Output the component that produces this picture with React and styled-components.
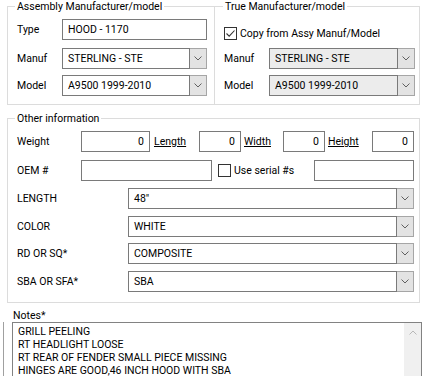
import styled, { createGlobalStyle } from "styled-components";

const GlobalStyle = createGlobalStyle`
  html, body {
    margin: 0;
    padding: 0;
    background: #ffffff;
  }
  body {
    width: 422px;
    height: 376px;
    overflow: hidden;
    font-family: Roboto, "Liberation Sans", Arial, sans-serif;
    font-size: 10.5px;
    color: #000;
  }
`;

const Page = styled.div`
  width: 422px;
  height: 376px;
  overflow: hidden;
  display: flex;
  flex-direction: column;
`;

const TopRow = styled.div`
  display: flex;
  padding-left: 7px;
`;

const Group = styled.fieldset`
  margin: ${(p) => p.$mt || 0}px 0 0 ${(p) => p.$ml || 0}px;
  padding: 6px 0 ${(p) => p.$pb}px 9px;
  width: ${(p) => p.$w}px;
  box-sizing: border-box;
  min-width: 0;
  border: 1px solid #dcdcdc;
`;

const Legend = styled.legend`
  margin-left: ${(p) => p.$ml}px;
  padding: 0 2px;
  height: 13px;
  line-height: 13px;
  white-space: nowrap;
`;

const Row = styled.div`
  display: flex;
  align-items: center;
  height: 21px;
  margin-top: ${(p) => p.$mt || 0}px;
`;

const Label = styled.div`
  width: ${(p) => p.$w}px;
  flex-shrink: 0;
  white-space: nowrap;
`;

const LinkLabel = styled.div`
  width: ${(p) => p.$w}px;
  padding-left: ${(p) => p.$pl}px;
  box-sizing: border-box;
  flex-shrink: 0;
  text-decoration: underline;
  white-space: nowrap;
`;

const TextBox = styled.div`
  width: ${(p) => p.$w}px;
  height: 21px;
  box-sizing: border-box;
  flex-shrink: 0;
  border: 1px solid #7a7a7a;
  background: #fff;
  display: flex;
  align-items: center;
  justify-content: ${(p) => (p.$right ? "flex-end" : "flex-start")};
  padding: 0 5px;
  white-space: nowrap;
  overflow: hidden;
`;

const Combo = styled.div`
  width: ${(p) => p.$w}px;
  height: 21px;
  flex-shrink: 0;
  display: flex;
`;

const ComboField = styled.div`
  flex: 1;
  min-width: 0;
  box-sizing: border-box;
  border: 1px solid #7a7a7a;
  background: ${(p) => (p.$disabled ? "#ececec" : "#fff")};
  display: flex;
  align-items: center;
  padding: 0 5px;
  white-space: nowrap;
  overflow: hidden;
`;

const DropButton = styled.div`
  width: 17px;
  flex-shrink: 0;
  box-sizing: border-box;
  border: 1px solid #a6a6a6;
  border-left: none;
  background: #e3e3e3;
  display: flex;
  align-items: center;
  justify-content: center;
`;

const CheckRow = styled.div`
  display: flex;
  align-items: center;
  height: 13px;
  margin-top: ${(p) => p.$mt || 0}px;
  white-space: nowrap;
`;

const Box = styled.div`
  width: 13px;
  height: 13px;
  box-sizing: border-box;
  flex-shrink: 0;
  border: 1px solid #333;
  background: #fff;
  display: flex;
  align-items: center;
  justify-content: center;
`;

const CheckText = styled.div`
  width: ${(p) => p.$w || "auto"};
  padding-left: 3px;
  flex-shrink: 0;
  white-space: nowrap;
`;

const Spacer = styled.div`
  width: ${(p) => p.$w}px;
  flex-shrink: 0;
`;

const NotesLabel = styled.div`
  margin-top: 6px;
  padding-left: 13px;
  height: 13px;
  line-height: 13px;
`;

const NotesRow = styled.div`
  display: flex;
  flex: 1;
`;

const Gutter = styled.div`
  width: 5px;
  margin-right: 8px;
  box-sizing: border-box;
  border-right: 1px solid #a0a0a0;
`;

const NotesBox = styled.div`
  width: 410px;
  height: 70px;
  flex-shrink: 0;
  box-sizing: border-box;
  border: 1px solid #828282;
  display: flex;
`;

const NotesText = styled.div`
  flex: 1;
  padding: 2px 0 0 5px;
  line-height: 13px;
  white-space: nowrap;
  overflow: hidden;
`;

const ScrollBar = styled.div`
  width: 17px;
  background: #f0f0f0;
  display: flex;
  justify-content: center;
  padding-top: 7px;
  box-sizing: border-box;
`;

const Chevron = ({ up, color = "#606060" }) => (
  <svg width="8" height="5" viewBox="0 0 8 5">
    <path
      d={up ? "M0.5 4.5 L4 1 L7.5 4.5" : "M0.5 0.5 L4 4 L7.5 0.5"}
      fill="none"
      stroke={color}
      strokeWidth="1"
    />
  </svg>
);

function ComboBox({ w, value, disabled }) {
  return (
    <Combo $w={w}>
      <ComboField $disabled={disabled}>{value}</ComboField>
      <DropButton>
        <Chevron />
      </DropButton>
    </Combo>
  );
}

function CheckBox({ checked }) {
  return (
    <Box>
      {checked && (
        <svg width="11" height="11" viewBox="0 0 11 11">
          <path d="M1.5 5.5 L4.2 8.2 L9.5 2.5" fill="none" stroke="#333" strokeWidth="1.1" />
        </svg>
      )}
    </Box>
  );
}

const extraFields = [
  { label: "LENGTH", value: '48"', mt: 7 },
  { label: "COLOR", value: "WHITE", mt: 7 },
  { label: "RD OR SQ*", value: "COMPOSITE", mt: 6 },
  { label: "SBA OR SFA*", value: "SBA", mt: 7 },
];

const notes = [
  "GRILL PEELING",
  "RT HEADLIGHT LOOSE",
  "RT REAR OF FENDER SMALL PIECE MISSING",
  "HINGES ARE GOOD,46 INCH HOOD WITH SBA",
];

export default function App() {
  return (
    <Page>
      <GlobalStyle />
      <TopRow>
        <Group $w={208} $pb={8}>
          <Legend $ml={-2}>Assembly Manufacturer/model</Legend>
          <Row>
            <Label $w={45}>Type</Label>
            <TextBox $w={145}>HOOD - 1170</TextBox>
          </Row>
          <Row $mt={8}>
            <Label $w={45}>Manuf</Label>
            <ComboBox w={145} value="STERLING - STE" />
          </Row>
          <Row $mt={6}>
            <Label $w={45}>Model</Label>
            <ComboBox w={145} value="A9500 1999-2010" />
          </Row>
        </Group>
        <Group $w={206} $ml={-1} $pb={8}>
          <Legend $ml={-1}>True Manufacturer/model</Legend>
          <CheckRow $mt={8}>
            <CheckBox checked />
            <CheckText>Copy from Assy Manuf/Model</CheckText>
          </CheckRow>
          <Row $mt={8}>
            <Label $w={45}>Manuf</Label>
            <ComboBox w={146} value="STERLING - STE" disabled />
          </Row>
          <Row $mt={6}>
            <Label $w={45}>Model</Label>
            <ComboBox w={146} value="A9500 1999-2010" disabled />
          </Row>
        </Group>
      </TopRow>

      <TopRow>
        <Group $w={413} $mt={7} $pb={10}>
          <Legend $ml={-2}>Other information</Legend>
          <Row>
            <Label $w={64}>Weight</Label>
            <TextBox $w={69} $right>0</TextBox>
            <LinkLabel $w={49} $pl={4}>Length</LinkLabel>
            <TextBox $w={42} $right>0</TextBox>
            <LinkLabel $w={42} $pl={3}>Width</LinkLabel>
            <TextBox $w={42} $right>0</TextBox>
            <LinkLabel $w={47} $pl={3}>Height</LinkLabel>
            <TextBox $w={42} $right>0</TextBox>
          </Row>
          <Row $mt={8}>
            <Label $w={64}>OEM #</Label>
            <TextBox $w={131} />
            <Spacer $w={6} />
            <CheckBox />
            <CheckText $w="80px">Use serial #s</CheckText>
            <TextBox $w={100} />
          </Row>
          {extraFields.map((f) => (
            <Row key={f.label} $mt={f.mt}>
              <Label $w={111}>{f.label}</Label>
              <ComboBox w={286} value={f.value} />
            </Row>
          ))}
        </Group>
      </TopRow>

      <NotesLabel>Notes*</NotesLabel>
      <NotesRow>
        <Gutter />
        <NotesBox>
          <NotesText>
            {notes.map((n) => (
              <div key={n}>{n}</div>
            ))}
          </NotesText>
          <ScrollBar>
            <Chevron up color="#b8b8b8" />
          </ScrollBar>
        </NotesBox>
      </NotesRow>
    </Page>
  );
}
